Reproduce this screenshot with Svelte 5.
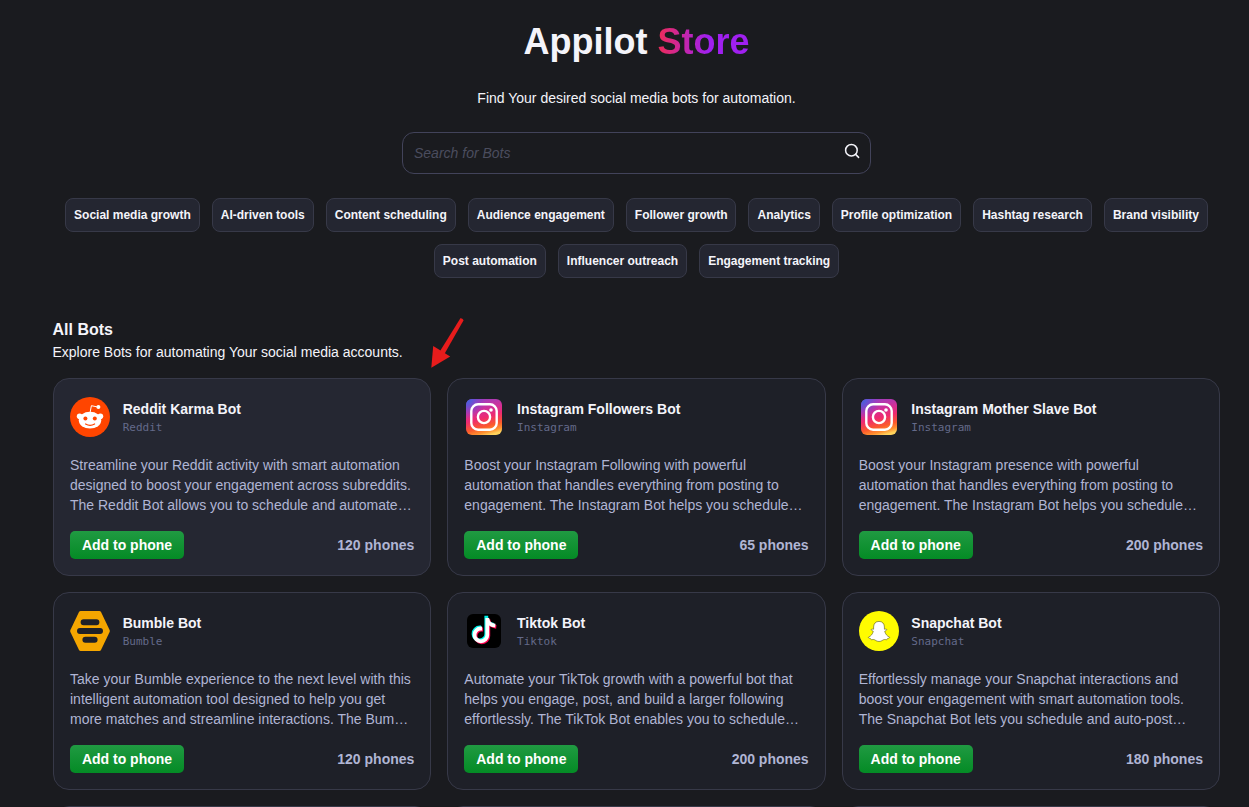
<script>
  const tags = [
    'Social media growth', 'AI-driven tools', 'Content scheduling', 'Audience engagement',
    'Follower growth', 'Analytics', 'Profile optimization', 'Hashtag research',
    'Brand visibility', 'Post automation', 'Influencer outreach', 'Engagement tracking'
  ];

  const bots = [
    { name: 'Reddit Karma Bot', platform: 'Reddit', icon: 'reddit', phones: 120, active: true,
      lines: ['Streamline your Reddit activity with smart automation', 'designed to boost your engagement across subreddits.', 'The Reddit Bot allows you to schedule and automate…'] },
    { name: 'Instagram Followers Bot', platform: 'Instagram', icon: 'instagram', phones: 65,
      lines: ['Boost your Instagram Following with powerful', 'automation that handles everything from posting to', 'engagement. The Instagram Bot helps you schedule…'] },
    { name: 'Instagram Mother Slave Bot', platform: 'Instagram', icon: 'instagram', phones: 200,
      lines: ['Boost your Instagram presence with powerful', 'automation that handles everything from posting to', 'engagement. The Instagram Bot helps you schedule…'] },
    { name: 'Bumble Bot', platform: 'Bumble', icon: 'bumble', phones: 120,
      lines: ['Take your Bumble experience to the next level with this', 'intelligent automation tool designed to help you get', 'more matches and streamline interactions. The Bum…'] },
    { name: 'Tiktok Bot', platform: 'Tiktok', icon: 'tiktok', phones: 200,
      lines: ['Automate your TikTok growth with a powerful bot that', 'helps you engage, post, and build a larger following', 'effortlessly. The TikTok Bot enables you to schedule…'] },
    { name: 'Snapchat Bot', platform: 'Snapchat', icon: 'snapchat', phones: 180,
      lines: ['Effortlessly manage your Snapchat interactions and', 'boost your engagement with smart automation tools.', 'The Snapchat Bot lets you schedule and auto-post…'] }
  ];
</script>

<main class="page">
  <h1>Appilot <span>Store</span></h1>
  <p class="tagline">Find Your desired social media bots for automation.</p>

  <div class="search">
    <input type="text" placeholder="Search for Bots" />
    <svg width="16" height="16" viewBox="0 0 16 16" fill="none" stroke="#f4f4fa" stroke-width="1.5" stroke-linecap="round">
      <circle cx="7.4" cy="7.2" r="5.8" />
      <path d="M11.6 11.4 14.6 14.4" />
    </svg>
  </div>

  <div class="tags">
    {#each tags as tag}
      <button class="tag">{tag}</button>
    {/each}
  </div>

  <section>
    <div class="heading">
      <h2>All Bots</h2>
      <p>Explore Bots for automating Your social media accounts.</p>
      <svg class="arrow" width="36" height="54" viewBox="0 0 36 54" fill="#e81c1c">
        <path d="M32.4 2.2Q34.2 1.8 35.6 4.2L16.4 38 11.8 35.4Z" />
        <path d="M5.2 30 22.2 40.6 3.3 51.8Z" />
      </svg>
    </div>

    <div class="grid">
      {#each bots as bot}
        <article class="card" class:active={bot.active}>
          <header>
            <svg class="icon" width="40" height="40" viewBox="0 0 40 40">
              {#if bot.icon === 'reddit'}
                <circle cx="20" cy="20" r="20" fill="#ff4500" />
                <g fill="#fff">
                  <ellipse cx="20" cy="23.2" rx="11.2" ry="8.4" />
                  <circle cx="9.6" cy="19.2" r="2.8" />
                  <circle cx="30.4" cy="19.2" r="2.8" />
                  <circle cx="28.4" cy="10" r="2" />
                </g>
                <path d="M20.2 15 21.4 8.7 27.8 10" fill="none" stroke="#fff" stroke-width="1" stroke-linejoin="round" />
                <circle cx="15.4" cy="21.6" r="2" fill="#ff4500" />
                <circle cx="24.8" cy="21.6" r="2" fill="#ff4500" />
                <path d="M15.6 27q4.5 2.6 9 0" fill="none" stroke="#ff4500" stroke-width="1.2" stroke-linecap="round" />
              {:else if bot.icon === 'instagram'}
                <defs>
                  <linearGradient id="ig-warm" x1=".36" y1="0" x2=".64" y2="1">
                    <stop offset="0" stop-color="#9a3fc0" />
                    <stop offset=".3" stop-color="#d0309a" />
                    <stop offset=".52" stop-color="#ee2a70" />
                    <stop offset=".76" stop-color="#fb5a2c" />
                    <stop offset=".9" stop-color="#ff9230" />
                    <stop offset="1" stop-color="#ffd35c" />
                  </linearGradient>
                  <radialGradient id="ig-cool" gradientUnits="userSpaceOnUse" cx="2" cy="2" r="20">
                    <stop offset="0" stop-color="#3c66e0" />
                    <stop offset=".25" stop-color="#4e5cdc" stop-opacity=".9" />
                    <stop offset="1" stop-color="#8a3ad0" stop-opacity="0" />
                  </radialGradient>
                </defs>
                <rect x="2" y="2" width="36" height="36" rx="6" fill="url(#ig-warm)" />
                <rect x="2" y="2" width="36" height="36" rx="6" fill="url(#ig-cool)" />
                <g fill="none" stroke="#fff" stroke-width="2.4">
                  <rect x="7.3" y="7.3" width="25.4" height="25.4" rx="6.8" />
                  <circle cx="20" cy="20" r="6.1" />
                </g>
                <circle cx="27" cy="13" r="1.8" fill="#fff" />
              {:else if bot.icon === 'bumble'}
                <path d="M10.6 0H29.4Q30.4 0 31 1L39.6 19Q40 20 39.6 21L31 39Q30.4 40 29.4 40H10.6Q9.6 40 9 39L.4 21Q0 20 .4 19L9 1Q9.6 0 10.6 0Z" fill="#f5a600" />
                <g stroke="#1e2028" stroke-width="6" stroke-linecap="round">
                  <path d="M13.6 11.2H26.4M10 20H30M15.4 28.8H24.6" />
                </g>
              {:else if bot.icon === 'tiktok'}
                <rect x="3" y="3" width="34" height="34" rx="6" fill="#000" />
                <g fill="none" stroke-width="3.8">
                  <path d="M22.3 4.8V22.9a6.4 6.4 0 1 1-6.4-6.4h1.2M22.3 6.6q.9 6.6 7.6 7.2" stroke="#00f2ea" />
                  <path d="M24.3 8.2V24.9a6.4 6.4 0 1 1-6.4-6.4h1.2M24.3 8.6q.9 6.6 8 7.2" stroke="#ff004f" />
                  <path d="M23.3 7V23.9a6.4 6.4 0 1 1-6.4-6.4h1.2M23.3 7.5q.9 6.6 8 7.2" stroke="#fff" />
                </g>
              {:else}
                <circle cx="20" cy="20" r="20" fill="#fffc00" />
                <path d="M20 10.4c3.6 0 5.4 2.5 5.4 5.6v2.2c.7.3 1.5-.5 2.2.1.5.6-.2 1.1-1.9 2 .7 2.8 2.4 4.9 4.8 5.8.7.4-.6 1.2-2 1.5-.5 1.6-1 1-2.8.9-2.1 0-2.7 2-5.7 2s-3.6-2-5.7-2c-1.8.1-2.3.7-2.8-.9-1.4-.3-2.7-1.1-2-1.5 2.4-.9 4.1-3 4.8-5.8-1.7-.9-2.4-1.4-1.9-2 .7-.6 1.5.2 2.2-.1V16c0-3.1 1.8-5.6 5.4-5.6Z" fill="#fff" stroke="#55551c" stroke-width=".6" stroke-linejoin="round" />
              {/if}
            </svg>
            <div class="names">
              <h3>{bot.name}</h3>
              <span class="platform">{bot.platform}</span>
            </div>
          </header>
          <p class="description">
            {#each bot.lines as line}
              <span>{line}</span>
            {/each}
          </p>
          <footer>
            <button class="add">Add to phone</button>
            <span class="phones">{bot.phones} phones</span>
          </footer>
        </article>
      {/each}
      {#each [1, 2, 3] as _}
        <article class="card"></article>
      {/each}
    </div>
  </section>
</main>

<style>
  :global(body) {
    background: #1a1b1f;
    overflow: hidden;
  }

  .page {
    box-sizing: border-box;
    width: 1249px;
    height: 807px;
    overflow: hidden;
    padding: 15px 29px 0 53px;
    color: #f4f4fa;
    background: #1a1b1f;
    font-family: 'Liberation Sans', Arial, sans-serif;
    display: flex;
    flex-direction: column;
  }

  h1, h2, h3, p { margin: 0; }

  h1 {
    text-align: center;
    font-size: 36px;
    line-height: 54px;
  }

  h1 span {
    color: transparent;
    background: linear-gradient(90deg, #f02c56, #a020f0 55%);
    background-clip: text;
  }

  .tagline {
    margin-top: 19px;
    text-align: center;
    font-size: 14px;
    line-height: 20px;
  }

  .search {
    box-sizing: border-box;
    align-self: center;
    display: flex;
    flex: none;
    align-items: center;
    width: 469px;
    height: 42px;
    margin-top: 24px;
    padding: 0 10px 0 11px;
    border: 1px solid #42435a;
    border-radius: 12px;
  }

  .search input {
    flex: 1;
    min-width: 0;
    padding: 0;
    border: 0;
    outline: 0;
    background: none;
    font: italic 14px 'Liberation Sans', Arial, sans-serif;
  }

  .search input::placeholder { color: #4b4d5e; }
  .search svg { margin-bottom: 4px; }

  .tags {
    display: flex;
    flex: none;
    flex-wrap: wrap;
    justify-content: center;
    gap: 12px;
    margin-top: 24px;
  }

  .tag {
    box-sizing: border-box;
    height: 34px;
    padding: 0 8px;
    border: 1px solid #373948;
    border-radius: 8px;
    color: #f4f4fa;
    background: #242631;
    font: bold 12px 'Liberation Sans', Arial, sans-serif;
    white-space: nowrap;
  }

  section {
    flex: none;
    margin-top: 39px;
  }

  .heading { position: relative; }

  h2 {
    font-size: 16px;
    line-height: 25px;
    text-indent: -0.5px;
  }

  .heading p {
    font-size: 14px;
    line-height: 20px;
    text-indent: -0.5px;
  }

  .arrow {
    position: absolute;
    left: 375px;
    top: -1px;
    z-index: 1;
  }

  .grid {
    display: grid;
    grid-template-columns: repeat(3, 1fr);
    gap: 16px;
    margin-top: 16px;
  }

  .card {
    box-sizing: border-box;
    display: flex;
    flex-direction: column;
    gap: 16px;
    height: 198px;
    padding: 16px;
    border: 1px solid #373948;
    border-radius: 16px;
    background: #1e2028;
  }

  .card.active { background: #252732; }

  header {
    display: flex;
    align-items: center;
    gap: 12.7px;
    height: 44px;
  }

  .icon { flex: none; }

  h3 {
    font-size: 14px;
    line-height: 20px;
  }

  .platform {
    display: block;
    color: #646a8a;
    font: 11px/18px 'DejaVu Sans Mono', monospace;
    margin-bottom: -2px;
  }

  .description {
    color: #b0b5d4;
    font-size: 14px;
    line-height: 20px;
  }

  .description span {
    display: block;
    white-space: nowrap;
  }

  footer {
    display: flex;
    align-items: center;
    justify-content: space-between;
  }

  .add {
    width: 114px;
    height: 28px;
    padding: 0;
    border: 0;
    border-radius: 5px;
    color: #fff;
    background: linear-gradient(#209a42, #048b25);
    font: bold 14px 'Liberation Sans', Arial, sans-serif;
  }

  .phones {
    color: #b0b5d4;
    font-size: 14px;
    font-weight: bold;
  }
</style>
